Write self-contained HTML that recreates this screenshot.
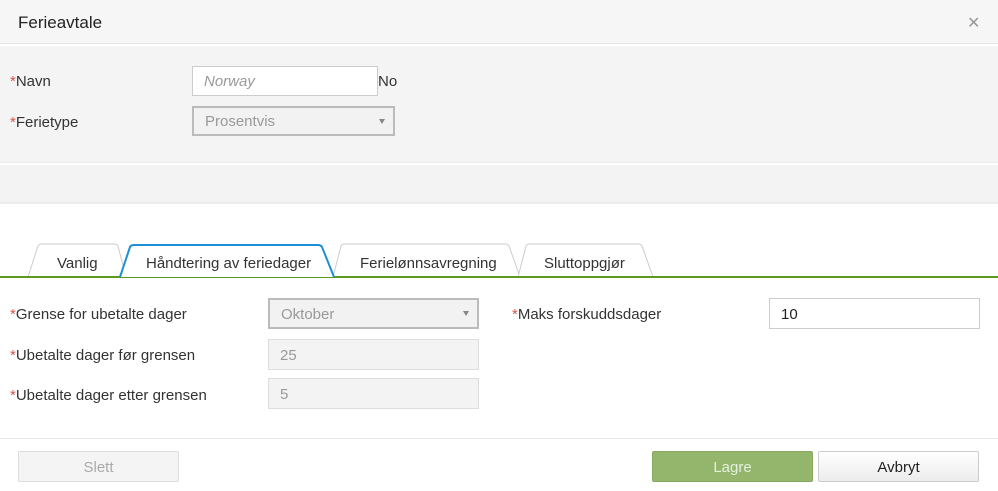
<!DOCTYPE html>
<html><head><style>
*{box-sizing:border-box;margin:0;padding:0}
body{width:998px;height:491px;background:#fff;font-family:"Liberation Sans",sans-serif;font-size:15px;color:#333;position:relative;overflow:hidden}
.a{position:absolute}
.r{color:#d9534f}
.in{position:absolute;border:1px solid #ccc;background:#fff;padding-left:11px;padding-top:1px;display:flex;align-items:center;font-size:15px}
.dis{background:#f3f3f3;border-color:#ddd;color:#999}
.sel{border:2px solid #bbb;background:#f2f2f2;color:#999}
.arr{position:absolute;right:8px;top:11px;width:0;height:0;border-left:3.5px solid transparent;border-right:3.5px solid transparent;border-top:5px solid #888}
.btn{position:absolute;top:451px;height:31px;width:161px;text-align:center;line-height:31px;font-size:15px;border-radius:2px}
</style></head><body>
<div class="a" style="left:0;top:0;width:998px;height:44px;background:#f6f6f6;border-bottom:1px solid #e6e6e6"></div>
<div class="a" style="left:18px;top:13px;font-size:17px;color:#222">Ferieavtale</div>
<div class="a" style="left:967px;top:13px;font-size:16px;color:#999">✕</div>
<div class="a" style="left:0;top:46px;width:998px;height:117px;background:#f4f4f4;border-bottom:1px solid #ececec"></div>
<div class="a" style="left:0;top:165px;width:998px;height:39px;background:#f3f3f3;border-bottom:2px solid #ececec"></div>
<div class="a" style="left:10px;top:73px"><span class="r">*</span>Navn</div>
<div class="in" style="left:192px;top:66px;width:186px;height:30px;color:#999;font-style:italic">Norway</div>
<div class="a" style="left:378px;top:73px">No</div>
<div class="a" style="left:10px;top:114px"><span class="r">*</span>Ferietype</div>
<div class="in sel" style="left:192px;top:106px;width:203px;height:30px">Prosentvis<span class="arr"></span></div>
<svg class="a" style="left:0;top:240px" width="998" height="40">
<g fill="#fff" stroke="#ccc" stroke-width="1">
<path d="M28 37 L38 6 Q39 4 42 4 L114 4 Q117 4 118 6 L126 37"/>
<path d="M333 37 L341 6 Q342 4 345 4 L505 4 Q508 4 509 6 L520 37"/>
<path d="M518 37 L526 6 Q527 4 530 4 L638 4 Q641 4 642 6 L653 37"/>
</g>
<rect x="0" y="36" width="998" height="2" fill="#5b9b22"/>
<path d="M120 37 L130 7 Q131 5 134 5 L318 5 Q321 5 322 7 L334 37" fill="#fff" stroke="#1d8fd8" stroke-width="2"/>
</svg>
<div class="a" style="left:57px;top:255px">Vanlig</div>
<div class="a" style="left:146px;top:255px">Håndtering av feriedager</div>
<div class="a" style="left:360px;top:255px">Ferielønnsavregning</div>
<div class="a" style="left:544px;top:255px">Sluttoppgjør</div>
<div class="a" style="left:10px;top:306px"><span class="r">*</span>Grense for ubetalte dager</div>
<div class="a" style="left:10px;top:347px"><span class="r">*</span>Ubetalte dager før grensen</div>
<div class="a" style="left:10px;top:387px"><span class="r">*</span>Ubetalte dager etter grensen</div>
<div class="in sel" style="left:268px;top:298px;width:211px;height:31px">Oktober<span class="arr"></span></div>
<div class="in dis" style="left:268px;top:339px;width:211px;height:31px">25</div>
<div class="in dis" style="left:268px;top:378px;width:211px;height:31px">5</div>
<div class="a" style="left:512px;top:306px"><span class="r">*</span>Maks forskuddsdager</div>
<div class="in" style="left:769px;top:298px;width:211px;height:31px;color:#222">10</div>
<div class="a" style="left:0;top:438px;width:998px;height:1px;background:#e8e8e8"></div>
<div class="btn" style="left:18px;background:#f4f4f4;border:1px solid #ddd;color:#aaa">Slett</div>
<div class="btn" style="left:652px;background:#93b56c;border:1px solid #86a85f;color:#e6f0dc">Lagre</div>
<div class="btn" style="left:818px;background:linear-gradient(#fff,#ececec);border:1px solid #ccc;color:#222">Avbryt</div>
</body></html>
